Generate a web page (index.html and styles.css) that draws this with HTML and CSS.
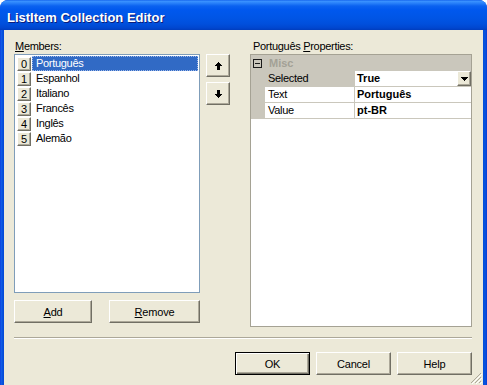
FILE: index.html
```html
<!DOCTYPE html>
<html>
<head>
<meta charset="utf-8">
<link rel="stylesheet" href="styles.css">
</head>
<body>
<div class="window">
  <div class="titlebar"><span class="title">ListItem Collection Editor</span></div>
  <div class="client">
    <div class="main">
      <div class="leftcol">
        <div class="label"><u>M</u>embers:</div>
        <div class="listbox">
          <div class="item selected"><span class="idx">0</span><span class="name">Português</span></div>
          <div class="item"><span class="idx">1</span><span class="name">Espanhol</span></div>
          <div class="item"><span class="idx">2</span><span class="name">Italiano</span></div>
          <div class="item"><span class="idx">3</span><span class="name">Francês</span></div>
          <div class="item"><span class="idx">4</span><span class="name">Inglês</span></div>
          <div class="item"><span class="idx">5</span><span class="name">Alemão</span></div>
        </div>
        <div class="editbtns">
          <button class="btn btn-add"><u>A</u>dd</button>
          <button class="btn btn-remove"><u>R</u>emove</button>
        </div>
      </div>
      <div class="arrows">
        <button class="btn arrow"><svg width="7" height="8" viewBox="0 0 7 8" shape-rendering="crispEdges"><rect x="3" y="0" width="1" height="1"/><rect x="2" y="1" width="3" height="1"/><rect x="1" y="2" width="5" height="1"/><rect x="0" y="3" width="7" height="1"/><rect x="2" y="4" width="3" height="4"/></svg></button>
        <button class="btn arrow"><svg width="7" height="8" viewBox="0 0 7 8" shape-rendering="crispEdges"><rect x="2" y="0" width="3" height="4"/><rect x="0" y="4" width="7" height="1"/><rect x="1" y="5" width="5" height="1"/><rect x="2" y="6" width="3" height="1"/><rect x="3" y="7" width="1" height="1"/></svg></button>
      </div>
      <div class="rightcol">
        <div class="label props-label">Português <u>P</u>roperties:</div>
        <div class="grid">
          <div class="cat">
            <svg class="expander" width="9" height="9" viewBox="0 0 9 9" shape-rendering="crispEdges"><rect x="0.5" y="0.5" width="8" height="8" fill="none" stroke="#1a1a1a"/><rect x="2" y="4" width="5" height="1" fill="#1a1a1a"/></svg>
            <span class="cat-name">Misc</span>
          </div>
          <div class="prop sel">
            <div class="gutter"></div>
            <div class="pname">Selected</div>
            <div class="pvalue"><span class="vtext">True</span><button class="btn dd"><svg width="7" height="4" viewBox="0 0 7 4" shape-rendering="crispEdges"><rect x="0" y="0" width="7" height="1"/><rect x="1" y="1" width="5" height="1"/><rect x="2" y="2" width="3" height="1"/><rect x="3" y="3" width="1" height="1"/></svg></button></div>
          </div>
          <div class="prop">
            <div class="gutter"></div>
            <div class="pname">Text</div>
            <div class="pvalue"><span class="vtext">Português</span></div>
          </div>
          <div class="prop">
            <div class="gutter"></div>
            <div class="pname">Value</div>
            <div class="pvalue"><span class="vtext">pt-BR</span></div>
          </div>
        </div>
      </div>
    </div>
    <div class="separator"></div>
    <div class="footer">
      <button class="btn dlg default">OK</button>
      <button class="btn dlg">Cancel</button>
      <button class="btn dlg">Help</button>
    </div>
    <svg class="grip" width="12" height="12" viewBox="0 0 12 12" shape-rendering="crispEdges">
      <path d="M11 1 L1 11 M11 5 L5 11 M11 9 L9 11" stroke="#aca899" stroke-width="1.2" fill="none"/>
      <path d="M12 2 L2 12 M12 6 L6 12 M12 10 L10 12" stroke="#fff" stroke-width="1" fill="none"/>
    </svg>
  </div>
</div>
</body>
</html>
```
FILE: styles.css
```css
* { box-sizing: border-box; }
body {
  margin: 0;
  width: 487px;
  height: 385px;
  overflow: hidden;
  background: #ffffff;
  font-family: "Liberation Sans", Arial, sans-serif;
  font-size: 11px;
  color: #000;
}
.window {
  width: 487px;
  height: 385px;
  display: flex;
  flex-direction: column;
  background: linear-gradient(to right, #0831d9 0, #1663ea 1px, #0a55e0 2px, #0349d6 4px, #0349d6 483px, #0553e0 484px, #0a4fd8 486px, #0831d9 487px);
  border-radius: 8px 8px 0 0;
}
.titlebar {
  height: 30px;
  padding: 10px 0 0 7px;
  border-radius: 8px 8px 0 0;
  background: linear-gradient(to bottom, #0a57e8 0, #3d95ff 1px, #2a82fa 3px, #0b62f0 6px, #0058ee 10px, #0055e5 18px, #004fdc 24px, #0046cf 28px, #003dbd 30px);
}
.title {
  display: block;
  color: #fff;
  font-weight: bold;
  font-size: 13px;
  line-height: 15px;
  text-shadow: 1px 1px #0c1d7a;
}
.client {
  flex: 1;
  margin: 0 4px;
  background: #ece9d8;
  position: relative;
  padding: 8px 11px 0 10px;
  display: flex;
  flex-direction: column;
}
.main {
  display: flex;
  height: 289px;
}
.leftcol {
  width: 186px;
  display: flex;
  flex-direction: column;
}
.label {
  height: 16px;
  line-height: 16px;
  padding-left: 1px;
  letter-spacing: -0.3px;
}
.listbox {
  height: 239px;
  border: 1px solid #7f9db9;
  background: #fff;
  padding: 1px 1px 1px 2px;
}
.item {
  display: flex;
  height: 15px;
  align-items: center;
}
.idx {
  width: 14px;
  height: 14px;
  margin-right: 1px;
  border: 1px solid;
  border-color: #fff #716f64 #716f64 #fff;
  box-shadow: inset -1px -1px #aca899;
  background: #ece9d8;
  text-align: center;
  line-height: 12px;
}
.name {
  flex: 1;
  height: 15px;
  line-height: 13px;
  padding-left: 3px;
  border: 1px solid transparent;
  letter-spacing: -0.3px;
}
.selected .name {
  background: #316ac5;
  color: #fff;
  border: 1px dotted #9db8e8;
}
.editbtns {
  margin-top: 7px;
  display: flex;
  justify-content: space-between;
}
.btn {
  border: 1px solid;
  border-color: #fff #716f64 #716f64 #fff;
  box-shadow: inset -1px -1px #aca899;
  background: #ece9d8;
  font-family: "Liberation Sans", Arial, sans-serif;
  font-size: 11px;
  color: #000;
  padding: 0;
  height: 23px;
  display: flex;
  align-items: center;
  justify-content: center;
  letter-spacing: -0.2px;
}
.btn-add { width: 78px; }
.btn-remove { width: 91px; }
.arrows {
  margin-left: 6px;
  width: 24px;
  padding-top: 16px;
  display: flex;
  flex-direction: column;
  gap: 5px;
}
.arrow {
  width: 24px;
  height: 23px;
}
.rightcol {
  margin-left: 20px;
  width: 222px;
  display: flex;
  flex-direction: column;
}
.props-label { padding-left: 3px; }
.grid {
  height: 273px;
  border: 1px solid #a5a294;
  background: #fff;
}
.cat {
  height: 16px;
  background: #cac7bc;
  display: flex;
  align-items: center;
}
.expander {
  margin-left: 2px;
  margin-right: 7px;
}
.cat-name {
  font-weight: bold;
  color: #a3a196;
  line-height: 15px;
}
.prop {
  display: flex;
  height: 16px;
}
.gutter {
  width: 14px;
  background: #cac7bc;
}
.pname {
  width: 90px;
  padding-left: 3px;
  line-height: 15px;
  border-right: 1px solid #cac7bc;
  border-bottom: 1px solid #cac7bc;
  letter-spacing: -0.3px;
}
.sel .pname { background: #cac7bc; }
.pvalue {
  flex: 1;
  display: flex;
  padding-left: 2px;
  line-height: 15px;
  border-bottom: 1px solid #cac7bc;
}
.vtext {
  flex: 1;
  font-weight: bold;
}
.dd {
  width: 14px;
  height: 15px;
}
.separator {
  margin-top: 10px;
  border-top: 1px solid #aca899;
  border-bottom: 1px solid #fff;
}
.footer {
  margin-top: 13px;
  display: flex;
  justify-content: flex-end;
  gap: 6px;
}
.dlg { width: 75px; }
.default {
  border: 1px solid #000;
  box-shadow: inset 1px 1px #fff, inset -1px -1px #716f64, inset -2px -2px #aca899;
}
.grip {
  position: absolute;
  right: 1px;
  bottom: 1px;
}
```
